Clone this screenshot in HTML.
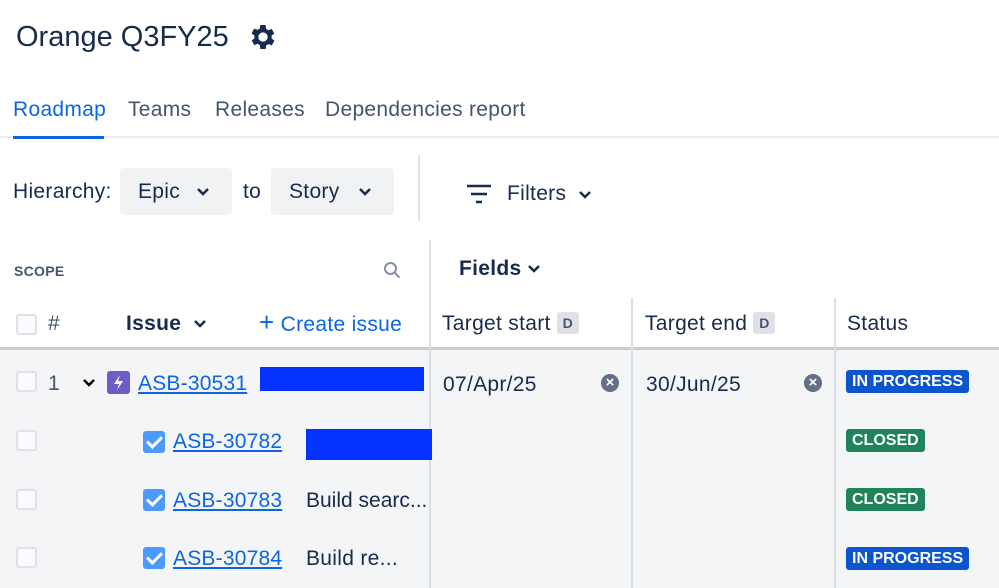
<!DOCTYPE html><html><head><style>
body{margin:0;width:999px;height:588px;overflow:hidden;background:#fff;font-family:"Liberation Sans",sans-serif;color:#172b4d;position:relative}
.a{position:absolute;white-space:nowrap}
.btn{position:absolute;background:#f1f2f4;border-radius:4px;height:47px;top:168px;font-size:21px;line-height:47px;letter-spacing:0.3px}
.cb{position:absolute;width:17px;height:17px;border:2px solid #dfe1e6;border-radius:3px;background:#fafbfc;left:16px}
.lnk{color:#0c66e4;text-decoration:underline;font-size:21px;letter-spacing:0.2px}
.badge{position:absolute;left:846px;height:23px;line-height:23px;color:#fff;font-weight:bold;font-size:16px;border-radius:3px;padding:0 6px}
.chk{position:absolute;left:143px;width:22px;height:22px;background:#4c9aff;border-radius:3px}
.chk::after{content:"";position:absolute;left:7px;top:2px;width:6px;height:12px;border:solid #fff;border-width:0 3px 3px 0;transform:rotate(45deg)}
.x{position:absolute;width:18px;height:18px;border-radius:50%;background:#626f86;color:#fff;font-size:15px;line-height:18px;text-align:center;font-weight:bold}
.dk{display:inline-block;background:#dfe1e6;border-radius:3px;width:22px;height:22px;line-height:22px;text-align:center;font-size:14px;font-weight:bold;color:#44546f;vertical-align:2px;margin-left:6px;letter-spacing:0}
.t{font-size:21px;letter-spacing:0.3px}
</style></head><body>
<div class="a" style="left:16px;top:21px;font-size:29px">Orange Q3FY25</div>
<svg class="a" style="left:247px;top:21px" width="32" height="32" viewBox="0 0 24 24"><path fill="#172b4d" d="M19.4 13a7.5 7.5 0 0 0 0-2l2.1-1.6-2-3.5-2.5 1a7.5 7.5 0 0 0-1.7-1L15 3h-4l-.4 2.7a7.5 7.5 0 0 0-1.7 1l-2.5-1-2 3.5L6.6 11a7.5 7.5 0 0 0 0 2l-2.1 1.6 2 3.5 2.5-1a7.5 7.5 0 0 0 1.7 1L11 21h4l.4-2.7a7.5 7.5 0 0 0 1.7-1l2.5 1 2-3.5zM13 15.5a3.5 3.5 0 1 1 0-7 3.5 3.5 0 0 1 0 7z" transform="translate(-1 0)"/></svg>
<div class="a t" style="left:13px;top:98px;color:#0c66e4">Roadmap</div>
<div class="a t" style="left:128px;top:98px;color:#44546f">Teams</div>
<div class="a t" style="left:215px;top:98px;color:#44546f">Releases</div>
<div class="a t" style="left:325px;top:98px;color:#44546f">Dependencies report</div>
<div class="a" style="left:0;top:136px;width:999px;height:2px;background:#ebecf0"></div>
<div class="a" style="left:13px;top:136px;width:91px;height:3px;background:#0c66e4"></div>
<div class="a t" style="left:13px;top:180px">Hierarchy:</div>
<div class="btn" style="left:120px;width:112px"><span style="margin-left:18px">Epic</span></div>
<div class="a t" style="left:243px;top:180px">to</div>
<div class="btn" style="left:271px;width:123px"><span style="margin-left:18px">Story</span></div>
<svg class="a" style="left:197px;top:188px" width="12" height="9"><path d="M1 1l5 5 5-5" stroke="#172b4d" stroke-width="2.5" fill="none"/></svg>
<svg class="a" style="left:359px;top:188px" width="12" height="9"><path d="M1 1l5 5 5-5" stroke="#172b4d" stroke-width="2.5" fill="none"/></svg>
<div class="a" style="left:418px;top:155px;width:2px;height:66px;background:#dfe1e6"></div>
<svg class="a" style="left:466px;top:184px" width="26" height="20"><path d="M1 2h24M5 10h16M10 18h6" stroke="#172b4d" stroke-width="2.5"/></svg>
<div class="a t" style="left:507px;top:182px">Filters</div>
<svg class="a" style="left:579px;top:191px" width="12" height="9"><path d="M1 1l5 5 5-5" stroke="#172b4d" stroke-width="2.5" fill="none"/></svg>
<div class="a" style="left:0;top:350px;width:999px;height:238px;background:#f4f5f7"></div>
<div class="a" style="left:0;top:347px;width:999px;height:3px;background:#c9ccd2"></div>
<div class="a" style="left:429px;top:240px;width:2px;height:348px;background:#dcdfe4"></div>
<div class="a" style="left:631px;top:298px;width:2px;height:290px;background:#dcdfe4"></div>
<div class="a" style="left:834px;top:298px;width:2px;height:290px;background:#dcdfe4"></div>
<div class="a" style="left:14px;top:263px;font-size:14px;font-weight:bold;color:#44546f;letter-spacing:0.3px">SCOPE</div>
<svg class="a" style="left:383px;top:261px" width="18" height="18"><circle cx="7.5" cy="7.5" r="5.5" stroke="#8590a2" stroke-width="2" fill="none"/><path d="M11.5 11.5l5 5" stroke="#8590a2" stroke-width="2"/></svg>
<div class="a t" style="left:459px;top:257px;font-weight:bold">Fields</div>
<svg class="a" style="left:528px;top:265px" width="12" height="9"><path d="M1 1l5 5 5-5" stroke="#172b4d" stroke-width="2.5" fill="none"/></svg>
<div class="cb" style="top:314px"></div>
<div class="a t" style="left:48px;top:312px;color:#44546f">#</div>
<div class="a t" style="left:126px;top:312px;font-weight:bold">Issue</div>
<svg class="a" style="left:194px;top:320px" width="12" height="9"><path d="M1 1l5 5 5-5" stroke="#172b4d" stroke-width="2.5" fill="none"/></svg>
<div class="a t" style="left:259px;top:312px;color:#0c66e4"><span style="font-size:26px;line-height:20px">+</span> Create issue</div>
<div class="a t" style="left:442px;top:312px">Target start<span class="dk">D</span></div>
<div class="a t" style="left:645px;top:312px">Target end<span class="dk">D</span></div>
<div class="a t" style="left:847px;top:312px">Status</div>
<!-- row1 -->
<div class="cb" style="top:371px"></div>
<div class="a t" style="left:48px;top:372px;color:#44546f">1</div>
<svg class="a" style="left:83px;top:379px" width="12" height="9"><path d="M1 1l5 5 5-5" stroke="#000" stroke-width="2.5" fill="none"/></svg>
<div class="a" style="left:107px;top:371px;width:23px;height:23px;background:#6e5dc6;border-radius:3px"><svg width="23" height="23"><path d="M13 4l-6 9h5l-2 6 6-9h-5z" fill="#fff"/></svg></div>
<div class="a lnk" style="left:138px;top:372px">ASB-30531</div>
<div class="a" style="left:260px;top:367px;width:164px;height:24px;background:#0433ff"></div>
<div class="a t" style="left:443px;top:373px">07/Apr/25</div>
<div class="x" style="left:601px;top:374px">×</div>
<div class="a t" style="left:646px;top:373px">30/Jun/25</div>
<div class="x" style="left:804px;top:374px">×</div>
<div class="badge" style="top:370px;background:#0c55cf">IN PROGRESS</div>
<!-- row2 -->
<div class="cb" style="top:430px"></div>
<div class="chk" style="top:431px"></div>
<div class="a lnk" style="left:173px;top:430px">ASB-30782</div>
<div class="a" style="left:306px;top:429px;width:126px;height:31px;background:#0433ff"></div>
<div class="badge" style="top:429px;background:#1f845a">CLOSED</div>
<!-- row3 -->
<div class="cb" style="top:489px"></div>
<div class="chk" style="top:489px"></div>
<div class="a lnk" style="left:173px;top:489px">ASB-30783</div>
<div class="a t" style="left:306px;top:489px;letter-spacing:0">Build searc...</div>
<div class="badge" style="top:488px;background:#1f845a">CLOSED</div>
<!-- row4 -->
<div class="cb" style="top:547px"></div>
<div class="chk" style="top:547px"></div>
<div class="a lnk" style="left:173px;top:547px">ASB-30784</div>
<div class="a t" style="left:306px;top:547px">Build re...</div>
<div class="badge" style="top:547px;background:#0c55cf">IN PROGRESS</div>
</body></html>
